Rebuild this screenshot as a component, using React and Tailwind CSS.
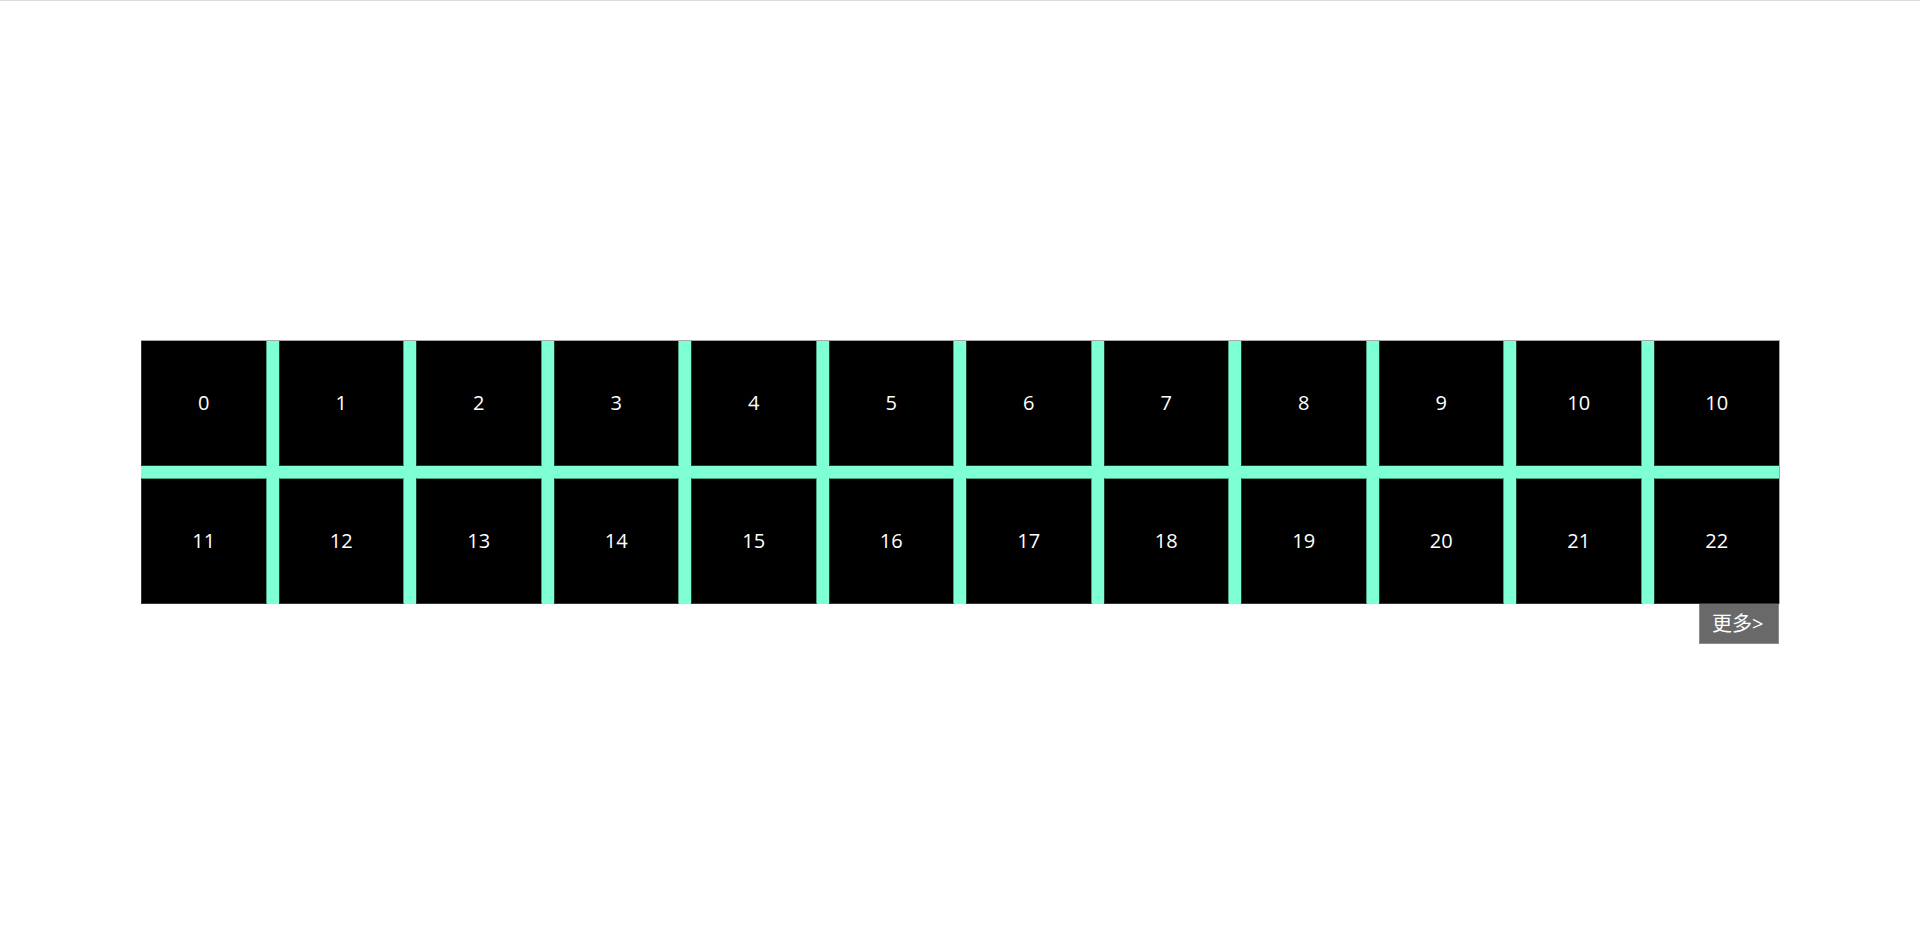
const labels = [0, 1, 2, 3, 4, 5, 6, 7, 8, 9, 10, 10, 11, 12, 13, 14, 15, 16, 17, 18, 19, 20, 21, 22];

export default function App() {
  return (
    <main className="flex min-h-screen items-center justify-center border-t border-[#dadada] bg-white pt-px pl-px font-['Open_Sans','Noto_Sans_CJK_SC',sans-serif] text-[20px] text-white">
      <section className="relative w-[1639px] max-w-full border-t border-r border-[#a8a8a8]">
        <ul className="grid grid-cols-12 grid-rows-[125px_126px] gap-3 bg-[#7fffd4]">
          {labels.map((label, i) => (
            <li
              key={i}
              className={
                "flex items-center justify-center border-b border-l border-b-[#1f3f35] border-l-[#1f3f35] bg-black " +
                (i < 12 ? "" : "border-t border-t-[#4f9f84] ") +
                (i % 12 === 11 ? "" : "border-r border-r-[#4f9f84]")
              }
            >
              {label}
            </li>
          ))}
        </ul>
        <button
          type="button"
          className="absolute top-full right-0 flex h-10 w-20 items-center border-r border-b border-l border-[#8c8c8c] bg-[#696969] pt-px pl-3 whitespace-nowrap"
        >
          更多&gt;
        </button>
      </section>
    </main>
  );
}
